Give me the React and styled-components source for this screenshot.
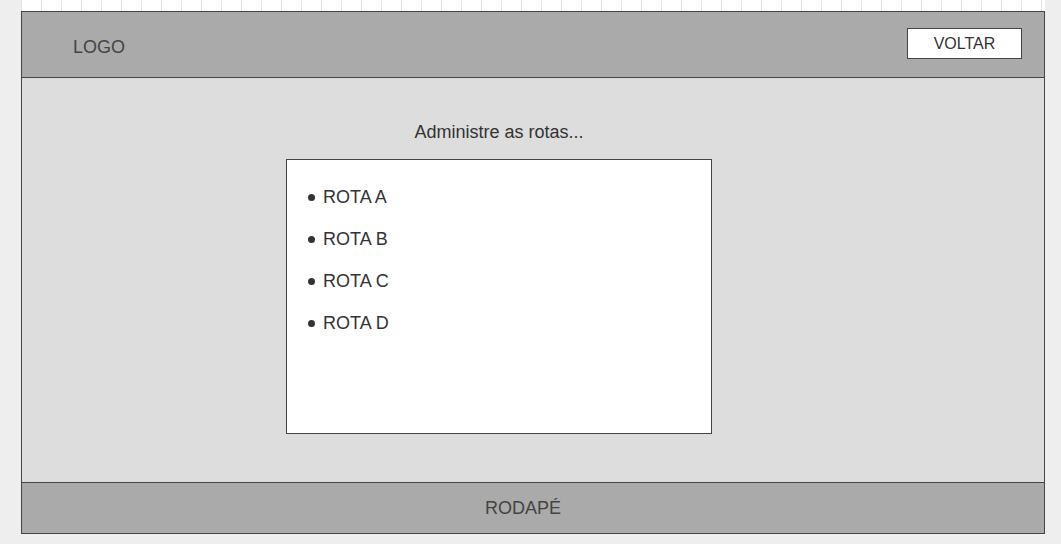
import styled, { createGlobalStyle } from "styled-components";

const rotas = ["ROTA A", "ROTA B", "ROTA C", "ROTA D"];

function App() {
  return (
    <Page>
      <GlobalStyle />
      <Sheet>
        <GridStrip />
        <Frame>
          <Header>
            <Logo>LOGO</Logo>
            <BackButton type="button">VOLTAR</BackButton>
          </Header>
          <Content>
            <Column>
              <Title>Administre as rotas...</Title>
              <RouteBox>
                <RouteList>
                  {rotas.map((rota) => (
                    <RouteItem key={rota}>
                      <Bullet />
                      {rota}
                    </RouteItem>
                  ))}
                </RouteList>
              </RouteBox>
            </Column>
          </Content>
          <Footer>RODAPÉ</Footer>
        </Frame>
      </Sheet>
    </Page>
  );
}

const GlobalStyle = createGlobalStyle`
  html, body {
    margin: 0;
    padding: 0;
    background: #eeeeee;
  }

  body {
    font-family: "Liberation Sans", Arial, sans-serif;
    color: #333;
  }
`;

const Page = styled.div`
  min-height: 544px;
  padding-left: 21px;
  background: #eeeeee;
`;

const Sheet = styled.div`
  width: 1024px;
  display: flex;
  flex-direction: column;
`;

const GridStrip = styled.div`
  height: 11px;
  background-color: #fff;
  background-image: linear-gradient(to right, #e4e4e4 1px, transparent 1px);
  background-size: 20px 100%;
  background-position: 20px 0;
`;

const Frame = styled.div`
  border: 1px solid #444;
  display: flex;
  flex-direction: column;
`;

const Header = styled.header`
  height: 66px;
  box-sizing: border-box;
  padding: 16px 22px 0 51px;
  display: flex;
  justify-content: space-between;
  align-items: flex-start;
  background: #aaaaaa;
  border-bottom: 1px solid #444;
`;

const Logo = styled.div`
  margin-top: 9px;
  font-size: 18px;
  line-height: 20px;
  color: #444;
`;

const BackButton = styled.button`
  width: 115px;
  height: 31px;
  box-sizing: border-box;
  margin: 0;
  padding: 0;
  background: #fff;
  border: 1px solid #444;
  font-family: "Liberation Sans", Arial, sans-serif;
  font-size: 16px;
  color: #333;
  cursor: pointer;
`;

const Content = styled.main`
  height: 404px;
  box-sizing: border-box;
  padding: 44px 0 0 264px;
  background: #dddddd;
`;

const Column = styled.div`
  width: 426px;
  display: flex;
  flex-direction: column;
  gap: 17px;
`;

const Title = styled.h2`
  margin: 0;
  font-size: 18px;
  font-weight: normal;
  line-height: 20px;
  text-align: center;
  color: #333;
`;

const RouteBox = styled.div`
  height: 275px;
  box-sizing: border-box;
  background: #fff;
  border: 1px solid #444;
  padding: 27px 21px;
`;

const RouteList = styled.ul`
  margin: 0;
  padding: 0;
  list-style: none;
  display: flex;
  flex-direction: column;
  gap: 22px;
`;

const RouteItem = styled.li`
  display: flex;
  align-items: center;
  gap: 8px;
  font-size: 18px;
  line-height: 20px;
  color: #333;
`;

const Bullet = styled.span`
  width: 7px;
  height: 7px;
  border-radius: 50%;
  background: #333;
  flex-shrink: 0;
`;

const Footer = styled.footer`
  height: 51px;
  box-sizing: border-box;
  padding-right: 20px;
  display: flex;
  align-items: center;
  justify-content: center;
  background: #aaaaaa;
  border-top: 1px solid #444;
  font-size: 18px;
  color: #444;
`;

export default App;
